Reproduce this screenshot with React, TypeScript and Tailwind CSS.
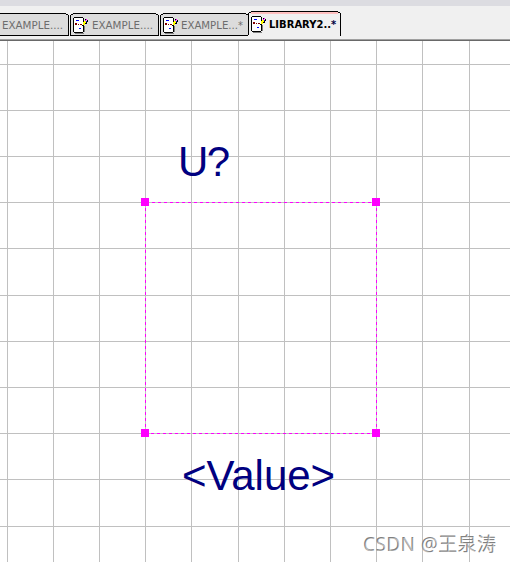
import React from 'react';

interface Tab {
  label: string;
  modified?: boolean;
  active?: boolean;
  width: string;
  textStart: number;
  textWidth: number;
}

const tabs: Tab[] = [
  { label: 'EXAMPLE....', width: 'w-[90px]', textStart: 1, textWidth: 61 },
  { label: 'EXAMPLE....', width: 'w-[90px]', textStart: 1, textWidth: 61 },
  { label: 'EXAMPLE...', modified: true, width: 'w-[88px]', textStart: 0, textWidth: 57 },
  { label: 'LIBRARY2..', modified: true, active: true, width: 'w-[93px]', textStart: 0, textWidth: 62 },
];

const columns = [7, 53, 99, 145, 191, 238, 284, 330, 376, 422, 469];
const rows = [64, 110, 156, 202, 248, 295, 341, 387, 433, 479, 526];
const handles = [[141, 198], [372, 198], [141, 429], [372, 429]];

const SchematicIcon = () => (
  <svg width="16" height="17" viewBox="0 0 16 17" shapeRendering="crispEdges" className="shrink-0">
    <path d="M1 1h10v14H1z" fill="#fff" />
    <path d="M0 1h1v14H0zM1 0h9v1H1zM10 1h1v3h-1zM10 9h1v6h-1zM1 15h9v1H1z" fill="#000" />
    <path d="M11 9h1v6h-1zM2 16h9v1H2z" fill="#808080" />
    <path d="M3 3h3v1H3zM6 11h2v1H6z" fill="#0000ff" />
    <path d="M2 6h2v2H2zM5 7h1v1H5zM7 7h2v1H7z" fill="#800000" />
    <path d="M11 4h2v2h-2zM10 5h2v3h-2z" fill="#ffff00" />
    <path d="M12 2h1v1h-1zM14 3h1v2h-1zM10 4h1v1h-1zM13 5h1v2h-1zM12 6h1v1h-1zM9 8h2v1H9z" fill="#000" />
    <path d="M13 2h1v1h-1zM12 3h1v1h-1z" fill="#ff00ff" />
    <path d="M13 4h1v1h-1z" fill="#0000ff" />
  </svg>
);

const DocumentTab = ({ tab }: { tab: Tab }) => (
  <div className={`relative shrink-0 ${tab.width} ${tab.active ? 'h-[25px]' : 'h-[23px]'}`}>
    <svg className="absolute inset-0 h-full w-full overflow-visible" shapeRendering="crispEdges">
      {tab.active ? (
        <>
          <path d="M0 25V3l3-3h87l3 3v22z" fill="#f0f0f0" />
          <path d="M3 1h87v2H3z" fill="#ffc0c0" />
          <path d="M3 0h87v1H3zM90 1h2v1h-2zM92 2h1v23h-1zM1 1h2v1H1zM0 2h1v22H0z" fill="#000" />
        </>
      ) : (
        <>
          <path d="M0 2h1V1h1V0h84v1h2v1h1v20H0z" fill="#dcdcdc" />
          <path d="M3 0h83v1H3zM1 1h2v1H1zM86 1h2v1h-2zM0 2h1v20H0zM88 2h1v20h-1zM0 22h89v1H0z" fill="#000" />
        </>
      )}
    </svg>
    <div className={`relative flex pl-[3px] ${tab.active ? 'pt-[5px]' : 'pt-[4px]'}`}>
      <SchematicIcon />
      <span className={`mt-px ml-[2px] flex whitespace-nowrap text-[11px] leading-[15px] font-['DejaVu_Sans_Condensed','DejaVu_Sans',sans-serif] ${tab.active ? 'font-bold text-black' : 'text-[#6d6d6d]'}`}>
        <svg width="66" height="15" className="overflow-visible">
          <text x={tab.textStart} y="11" fill="currentColor" textLength={tab.textWidth} lengthAdjust="spacingAndGlyphs">{tab.label}</text>
          {tab.modified && <text x={tab.textStart + tab.textWidth} y="11" fill={tab.active ? '#000040' : 'currentColor'}>*</text>}
        </svg>
      </span>
    </div>
  </div>
);

export default function App() {
  return (
    <div className="flex h-[562px] w-[510px] flex-col overflow-hidden bg-white">
      <div className="h-[6px] shrink-0 bg-[#dcdce1]" />
      <div className="flex h-[33px] shrink-0 items-end bg-[#f0f0f0] pb-[3px]">
        <div className="-ml-5 flex items-end">
          {tabs.map((tab, i) => (
            <DocumentTab key={i} tab={tab} />
          ))}
        </div>
      </div>
      <div className="h-px shrink-0 bg-[#a0a0a0]" />
      <div className="h-px shrink-0 bg-[#696969]" />

      {/* Part editor sheet */}
      <svg width="510" height="521" viewBox="0 41 510 521" className="block shrink-0" shapeRendering="crispEdges">
        {columns.map((x) => <rect key={x} x={x} y="41" width="1" height="521" fill="#c0c0c0" />)}
        {rows.map((y) => <rect key={y} x="0" y={y} width="510" height="1" fill="#c0c0c0" />)}
        <g stroke="#ff00ff" strokeDasharray="3 3">
          <path d="M146 202.5h231M145 433.5h232M145.5 202v232M376.5 202v232" />
        </g>
        {handles.map(([x, y]) => <rect key={`${x}-${y}`} x={x} y={y} width="8" height="8" fill="#ff00ff" />)}
        <g fill="#000080" fontFamily="Liberation Sans, sans-serif" fontSize="42">
          <text x="178" y="176" textLength="52">U?</text>
          <text x="182" y="490" textLength="153">&lt;Value&gt;</text>
        </g>
        {/* Watermark */}
        <g fontFamily="Noto Sans, Noto Sans CJK SC, sans-serif" fontSize="19">
          <text x="363" y="551" fill="#808080" textLength="133">CSDN @王泉涛</text>
          <text x="364" y="552" fill="#fff" fillOpacity="0.45" textLength="133">CSDN @王泉涛</text>
        </g>
      </svg>
    </div>
  );
}
